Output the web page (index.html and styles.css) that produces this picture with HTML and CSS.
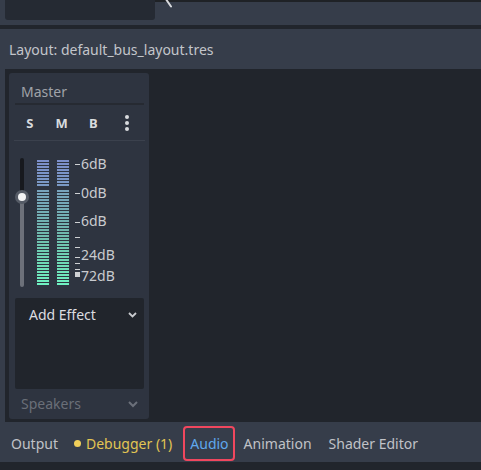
FILE: index.html
```html
<!DOCTYPE html>
<html>
<head>
<meta charset="utf-8">
<link rel="stylesheet" href="styles.css">
</head>
<body>
<div class="top">
  <div class="top-left"></div>
  <div class="top-box"></div>
  <div class="top-rest">
    <svg class="chev" width="8" height="10" viewBox="0 0 8 10"><path d="M1.5 0 L6 6.5" stroke="#d8dadd" stroke-width="2" stroke-linecap="round" fill="none"/></svg>
  </div>
</div>
<div class="sep"></div>
<div class="layout-bar">Layout: default_bus_layout.tres</div>
<div class="bus-area">
  <div class="bus">
    <div class="bus-name">Master</div>
    <div class="bus-buttons">
      <span class="btn">S</span>
      <span class="btn">M</span>
      <span class="btn">B</span>
      <span class="kebab"><i></i><i></i><i></i></span>
    </div>
    <div class="meters">
      <div class="slider">
        <div class="track-top"></div>
        <div class="knob"></div>
        <div class="track-bottom"></div>
      </div>
      <div class="meter">
        <div class="seg-top"></div>
        <div class="seg-bottom"></div>
      </div>
      <div class="meter">
        <div class="seg-top"></div>
        <div class="seg-bottom"></div>
      </div>
      <div class="scale">
        <span class="tick" style="top:6px"></span><span class="lbl" style="top:-3px">6dB</span>
        <span class="tick" style="top:35px"></span><span class="lbl" style="top:26px">0dB</span>
        <span class="tick" style="top:64px"></span><span class="lbl" style="top:54px">6dB</span>
        <span class="tick" style="top:79px"></span>
        <span class="tick" style="top:89px"></span>
        <span class="tick" style="top:99px"></span><span class="lbl" style="top:88px">24dB</span>
        <span class="tick" style="top:105px"></span>
        <span class="tick" style="top:111px"></span>
        <span class="tick block" style="top:114px"></span><span class="lbl" style="top:109px">72dB</span>
      </div>
    </div>
    <div class="effects">
      <div class="add-effect">
        <span>Add Effect</span>
        <svg width="11" height="8" viewBox="0 0 11 8"><path d="M2 2 L5.5 5.5 L9 2" stroke="#c9cbcf" stroke-width="1.8" fill="none"/></svg>
      </div>
    </div>
    <div class="speakers">
      <span>Speakers</span>
      <svg width="12" height="8" viewBox="0 0 12 8"><path d="M2 2 L6 6 L10 2" stroke="#6b707a" stroke-width="2" fill="none"/></svg>
    </div>
  </div>
</div>
<div class="tabs">
  <span class="tab">Output</span>
  <span class="tab debugger"><i class="dot"></i>Debugger (1)</span>
  <span class="tab audio">Audio</span>
  <span class="tab">Animation</span>
  <span class="tab">Shader Editor</span>
</div>
<div class="bottom"></div>
</body>
</html>
```

FILE: styles.css
```css
* { box-sizing: border-box; }
html, body { margin: 0; padding: 0; }
body {
  width: 481px;
  height: 470px;
  overflow: hidden;
  background: #363d4a;
  font-family: "Noto Sans", "Open Sans", sans-serif;
  font-size: 14px;
  color: #c6c8cc;
}
.top { display: flex; height: 25px; }
.top-left { width: 5px; }
.top-box {
  width: 150px;
  height: 20px;
  background: #252a33;
  border-radius: 0 0 3px 3px;
}
.top-rest {
  flex: 1;
  border-top: 2px solid #1f2226;
  padding-left: 10px;
}
.chev { display: block; margin-top: -2px; }
.sep { height: 4px; background: #21252c; }
.layout-bar {
  height: 40px;
  line-height: 40px;
  padding-top: 1px;
  padding-left: 9px;
  color: #c3c5ca;
}
.bus-area {
  margin-left: 5px;
  height: 353px;
  background: #21252c;
  padding: 4px 0 0 4px;
}
.bus {
  width: 140px;
  height: 346px;
  background: #2e3440;
  border-radius: 3px;
  display: flex;
  flex-direction: column;
  padding: 0 5px 0 6px;
}
.bus-name {
  height: 32px;
  line-height: 37px;
  padding-left: 6px;
  color: #a0a3a9;
  border-bottom: 2px solid #262a32;
}
.bus-buttons {
  height: 36px;
  display: flex;
  align-items: center;
  border-bottom: 1px solid #3b414d;
  margin: 0 -1px;
  font-weight: bold;
  font-size: 13px;
  color: #d9dbde;
}
.btn { width: 32px; text-align: center; }
.kebab {
  width: 36px;
  display: flex;
  flex-direction: column;
  align-items: center;
  gap: 2px;
}
.kebab i {
  display: block;
  width: 4px;
  height: 4px;
  border-radius: 50%;
  background: #d9dbde;
}
.meters {
  height: 150px;
  display: flex;
  padding-top: 17px;
}
.slider {
  width: 14px;
  height: 129px;
  display: flex;
  flex-direction: column;
  align-items: center;
}
.track-top {
  width: 4px;
  height: 36px;
  background: #17191e;
  border-radius: 2px 2px 0 0;
}
.knob {
  width: 14px;
  height: 14px;
  border-radius: 50%;
  background: #555b66;
  margin: -4px 0;
  position: relative;
  z-index: 1;
  display: flex;
  align-items: center;
  justify-content: center;
}
.knob::after {
  content: "";
  width: 8px;
  height: 8px;
  border-radius: 50%;
  background: #f2f3f4;
}
.track-bottom {
  width: 4px;
  flex: 1;
  background: #6d717a;
  border-radius: 0 0 2px 2px;
}
.meter {
  width: 12px;
  margin-left: 8px;
  height: 125px;
  display: flex;
  flex-direction: column;
  margin-top: 2px;
}
.seg-top {
  height: 27px;
  background:
    repeating-linear-gradient(to bottom, transparent 0 2px, #2e3440 2px 3px),
    linear-gradient(to bottom, #7c8fcc, #7a9ac4);
}
.seg-bottom {
  margin-top: 3px;
  flex: 1;
  background:
    repeating-linear-gradient(to bottom, transparent 0 2px, #2e3440 2px 3px),
    linear-gradient(to bottom, #78a2bd, #6fb8ad 45%, #6fd8b5 75%, #6ff2c2);
}
.scale {
  position: relative;
  width: 60px;
  margin-left: 6px;
  height: 130px;
}
.tick {
  position: absolute;
  left: 0;
  width: 5px;
  height: 1px;
  background: #cfd1d4;
}
.tick.block { height: 5px; }
.lbl {
  position: absolute;
  left: 6px;
  line-height: 18px;
  color: #c9cbcf;
}
.effects {
  height: 91px;
  margin-top: 7px;
  background: #21252c;
  border-radius: 2px;
}
.add-effect {
  display: flex;
  align-items: center;
  justify-content: space-between;
  padding: 7px 6px 0 14px;
  color: #dcdde0;
}
.speakers {
  display: flex;
  align-items: center;
  justify-content: space-between;
  padding: 5px 5px 0 6px;
  color: #6a6f78;
}
.tabs {
  height: 38px;
  margin-top: 2px;
  display: flex;
  align-items: center;
  padding-left: 11px;
}
.tab { margin-right: 17px; color: #c0c2c7; }
.debugger {
  color: #e2c553;
  display: flex;
  align-items: center;
}
.dot {
  width: 7px;
  height: 7px;
  border-radius: 50%;
  background: #f0cf5a;
  margin-right: 5px;
  margin-left: -1px;
}
.audio {
  color: #5fa8ee;
  border: 2.5px solid #f0475e;
  border-radius: 4px;
  padding: 6px 4px 6px 5px;
  margin-left: -6px;
  margin-right: 9px;
}
.bottom { height: 10px; background: #21252c; }
```
